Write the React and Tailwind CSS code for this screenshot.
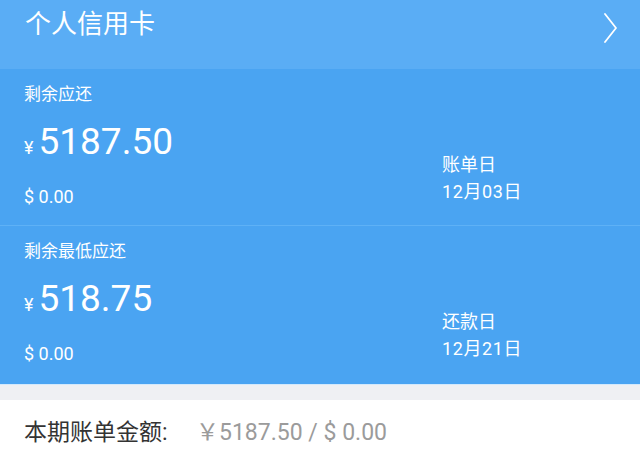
const sections = [
  { label: "剩余应还", amount: "5187.50", usd: "$ 0.00", dateLabel: "账单日", date: "12月03日", h: "h-[156px]" },
  { label: "剩余最低应还", amount: "518.75", usd: "$ 0.00", dateLabel: "还款日", date: "12月21日", h: "h-[158px]" },
];

function Section({ s }) {
  return (
    <div className={`flex ${s.h} bg-[#4aa4f2] pl-[24px] text-white`}>
      <div className="flex-1 pt-[14px]">
        <div className="text-[17px] leading-[22px]">{s.label}</div>
        <div className="mt-[15px] flex items-baseline leading-[44px]">
          <span className="mr-[5px] text-[18px]">¥</span>
          <span className="text-[37px]">{s.amount}</span>
        </div>
        <div className="mt-[15px] text-[18px] leading-[24px]">{s.usd}</div>
      </div>
      <div className="w-[198px] shrink-0 pt-[84px] text-[18px] leading-[24px]">
        <div>{s.dateLabel}</div>
        <div className="mt-[3px] tracking-[0.6px]">{s.date}</div>
      </div>
    </div>
  );
}

export default function App() {
  return (
    <div className="min-h-[452px] bg-white font-['Roboto','Noto_Sans_CJK_SC',sans-serif]">
      {/* card header */}
      <div className="flex h-[69px] items-start justify-between bg-[#5aadf5] pl-[25px] pr-[22px] text-white">
        <div className="pt-[8px] text-[26px] leading-[32px]">个人信用卡</div>
        <svg className="mt-[13px]" width="16" height="30" viewBox="0 0 16 30" fill="none">
          <polyline points="3,1 14,15 3,29" stroke="white" strokeWidth="1.8" strokeLinecap="round" strokeLinejoin="round" />
        </svg>
      </div>

      <Section s={sections[0]} />
      <div className="h-px bg-[#5eb1f6]" />
      <Section s={sections[1]} />

      <div className="h-[16px] border-t border-[#d3e9fc] bg-[#eff0f3]" />

      <div className="flex items-baseline pl-[24px] pt-[17px]">
        <span className="w-[172px] text-[23px] leading-[32px] text-[#333]">本期账单金额:</span>
        <span className="text-[23px] leading-[32px] text-[#9b9b9b]">￥5187.50 / $ 0.00</span>
      </div>
    </div>
  );
}
